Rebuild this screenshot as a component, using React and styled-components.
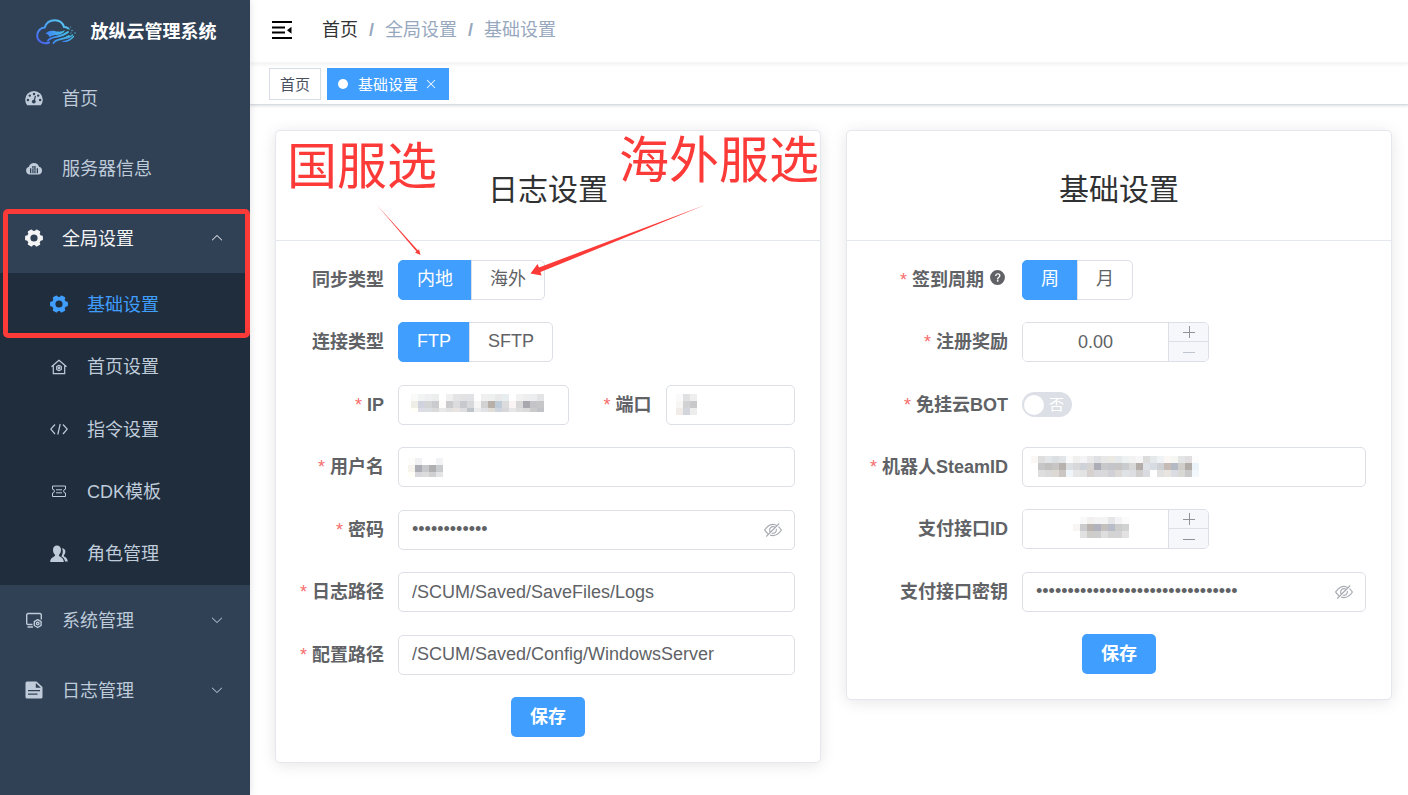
import React, { useState } from 'react'
import styled, { createGlobalStyle, css } from 'styled-components'

const GlobalStyle = createGlobalStyle`
    * {
        box-sizing: border-box;
    }
    body {
        margin: 0;
        background: #fff;
        color: #606266;
        font-family: "Liberation Sans", "Noto Sans CJK SC", sans-serif;
        font-size: 18px;
    }
    button, input {
        font-family: inherit;
        font-size: inherit;
        color: inherit;
    }
    a {
        text-decoration: none;
        color: inherit;
    }
`;

const Layout = styled.div`
    display: flex;
    min-height: 100vh;
`;

/* ---------- sidebar ---------- */

const Sidebar = styled.aside`
    position: relative;
    z-index: 2;
    flex: 0 0 250px;
    background: #304156;
    color: #bfcbd9;
    box-shadow: 0 0 8px rgba(0, 0, 0, 0.12);
`;

const Brand = styled.a`
    display: flex;
    align-items: center;
    justify-content: center;
    gap: 15px;
    height: 63px;
    padding-left: 2px;
`;

const BrandName = styled.h1`
    margin: 0;
    color: #fff;
    font-size: 18px;
    line-height: 62px;
`;

const itemStyle = css`
    display: flex;
    align-items: center;
    gap: 19px;
    width: 100%;
    padding: 0 26px 0 25px;
    border: none;
    background: none;
    text-align: left;
    cursor: pointer;
    svg:first-child {
        flex: none;
        width: 18px;
        height: 18px;
    }
    span {
        flex: 1;
        padding-bottom: 3px;
    }
`;

const MenuLink = styled.a`
    ${itemStyle}
    height: 70px;
`;

const MenuButton = styled.button`
    ${itemStyle}
    height: 70px;
    color: ${props => (props.$open ? '#f4f4f5' : '#bfcbd9')};
`;

const SubMenu = styled.div`
    display: flex;
    flex-direction: column;
    min-height: 312px;
    background: #1f2d3d;
`;

const SubLink = styled.a`
    ${itemStyle}
    flex: 1;
    padding-left: 50px;
    color: ${props => (props.$active ? '#409eff' : '#bfcbd9')};
`;

const Chevron = styled.svg`
    width: 14px;
    height: 14px;
    transform: ${props => (props.$up ? 'rotate(180deg)' : 'none')};
`;

const RedFrame = styled.div`
    position: absolute;
    top: 209px;
    left: 3px;
    right: 0;
    height: 129px;
    border: 5px solid #fc3a38;
    border-radius: 5px;
    pointer-events: none;
`;

/* ---------- top bars ---------- */

const Content = styled.div`
    flex: 1;
    min-width: 0;
`;

const Navbar = styled.header`
    display: flex;
    align-items: center;
    gap: 30px;
    height: 63px;
    padding-left: 21px;
    box-shadow: 0 1px 4px rgba(0, 21, 41, 0.08);
`;

const FoldButton = styled.button`
    display: flex;
    padding: 0 0 4px;
    border: none;
    background: none;
    color: #000;
`;

const Crumbs = styled.nav`
    display: flex;
    gap: 11px;
    line-height: 60px;
    padding-bottom: 3px;
    color: #97a8be;
    a {
        color: #303133;
    }
`;

const TagsBar = styled.div`
    display: flex;
    align-items: center;
    gap: 6px;
    height: 42px;
    padding-left: 19px;
    border-bottom: 1px solid #d8dce5;
    box-shadow: 0 1px 3px rgba(0, 0, 0, 0.12), 0 0 3px rgba(0, 0, 0, 0.04);
`;

const Tag = styled.a`
    display: flex;
    align-items: center;
    gap: 6px;
    height: 32px;
    padding: 0 10px;
    border: 1px solid ${props => (props.$active ? '#409eff' : '#d8dce5')};
    background: ${props => (props.$active ? '#409eff' : '#fff')};
    color: ${props => (props.$active ? '#fff' : '#495060')};
    font-size: 15px;
`;

const Dot = styled.i`
    width: 10px;
    height: 10px;
    margin-right: 4px;
    border-radius: 50%;
    background: #fff;
`;

/* ---------- cards ---------- */

const Main = styled.main`
    display: grid;
    grid-template-columns: 1fr 1fr;
    align-items: start;
    gap: 25px;
    padding: 25px 16px 25px 25px;
`;

const Card = styled.section`
    position: relative;
    border: 1px solid #e4e7ed;
    border-radius: 5px;
    background: #fff;
    box-shadow: 0 2px 15px rgba(0, 0, 0, 0.1);
`;

const CardTitle = styled.h2`
    margin: 0;
    height: 110px;
    padding-top: 9px;
    border-bottom: 1px solid #e4e7ed;
    color: #303133;
    font-size: 30px;
    font-weight: normal;
    line-height: 100px;
    text-align: center;
`;

const Form = styled.form`
    display: flex;
    flex-direction: column;
    justify-content: space-between;
    min-height: ${props => props.$minHeight}px;
    margin: 19px 25px 25px;
`;

const Row = styled.div`
    display: flex;
    align-items: center;
    height: 40px;
`;

const SplitRow = styled.div`
    display: grid;
    grid-template-columns: 13fr 11fr;
`;

const Label = styled.label`
    display: flex;
    flex: none;
    justify-content: flex-end;
    width: ${props => props.$width}px;
    padding-right: 14px;
    font-weight: bold;
    line-height: 40px;
    white-space: nowrap;
    svg {
        margin: 9px 2px 0 5px;
    }
`;

const Star = styled.span`
    margin-right: 5px;
    color: #f56c6c;
    font-weight: normal;
`;

const Field = styled.div`
    position: relative;
    display: flex;
    flex: 1;
    min-width: 0;
    align-items: center;
`;

const TextInput = styled.input`
    width: 100%;
    height: 40px;
    padding: 0 13px;
    border: 1px solid #dcdfe6;
    border-radius: 5px;
    outline: none;
    background: #fff;
`;

const EyeButton = styled.button`
    position: absolute;
    right: 13px;
    display: flex;
    padding: 0;
    border: none;
    background: none;
    color: #a8abb2;
`;

const Segments = styled.div`
    display: flex;
`;

const Segment = styled.label`
    display: flex;
    height: 40px;
    margin-left: -1px;
    padding: 0 18px;
    border: 1px solid ${props => (props.$on ? '#409eff' : '#dcdfe6')};
    background: ${props => (props.$on ? '#409eff' : '#fff')};
    color: ${props => (props.$on ? '#fff' : '#606266')};
    line-height: 36px;
    cursor: pointer;
    &:first-child {
        margin-left: 0;
        border-radius: 5px 0 0 5px;
    }
    &:last-child {
        border-radius: 0 5px 5px 0;
    }
    input {
        appearance: none;
        width: 0;
        margin: 0;
    }
`;

const NumberBox = styled.div`
    position: relative;
    display: flex;
    width: 187px;
    height: 40px;
    border: 1px solid #dcdfe6;
    border-radius: 5px;
    overflow: hidden;
    input {
        flex: 1;
        min-width: 0;
        padding: 0 5px;
        border: none;
        outline: none;
        text-align: center;
    }
`;

const Steps = styled.div`
    display: grid;
    grid-template-rows: 18px 1fr;
    width: 40px;
    border-left: 1px solid #dcdfe6;
`;

const StepButton = styled.button`
    display: flex;
    align-items: center;
    justify-content: center;
    padding: 0;
    border: none;
    background: #f5f7fa;
    color: ${props => (props.disabled ? '#c0c4cc' : '#909399')};
    & + & {
        border-top: 1px solid #dcdfe6;
    }
`;

const Switch = styled.label`
    display: flex;
    align-items: center;
    justify-content: space-between;
    width: 50px;
    height: 25px;
    padding: 0 8px 0 2px;
    border-radius: 13px;
    background: #dcdfe6;
    color: #fff;
    font-size: 15px;
    line-height: 25px;
    input {
        appearance: none;
        width: 20px;
        height: 20px;
        margin: 0;
        border-radius: 50%;
        background: #fff;
    }
`;

const SaveButton = styled.button`
    align-self: center;
    height: 40px;
    padding: 0 19px;
    border: none;
    border-radius: 5px;
    background: #409eff;
    color: #fff;
    font-weight: bold;
    line-height: 38px;
`;

const MosaicSvg = styled.svg`
    position: absolute;
    top: ${props => props.$top}px;
    left: ${props => props.$left}px;
    pointer-events: none;
`;

const Note = styled.p`
    position: absolute;
    top: ${props => props.$top}px;
    left: ${props => props.$left}px;
    margin: 0;
    color: #fc3a38;
    font-size: 50px;
    line-height: 60px;
    white-space: nowrap;
    pointer-events: none;
`;

const Arrows = styled.svg`
    position: absolute;
    top: 0;
    left: 0;
    pointer-events: none;
`;

/* ---------- icons ---------- */

const Glyph = ({ size = 18, children }) => (
    <svg width={size} height={size} viewBox="0 0 1024 1024" fill="currentColor" aria-hidden="true">{children}</svg>
)

const Line = ({ children, width = 1.3 }) => (
    <svg viewBox="0 0 18 18" fill="none" stroke="currentColor" strokeWidth={width} strokeLinejoin="round" aria-hidden="true">{children}</svg>
)

const CloseIcon = () => (
    <Glyph size={14}>
        <path d="M764.288 214.592 512 466.88 259.712 214.592a31.936 31.936 0 0 0-45.12 45.12L466.752 512 214.528 764.224a31.936 31.936 0 1 0 45.12 45.184L512 557.184l252.288 252.288a31.936 31.936 0 0 0 45.12-45.12L557.12 512.064l252.288-252.352a31.936 31.936 0 1 0-45.12-45.184z" />
    </Glyph>
)

const HideIcon = () => (
    <Glyph>
        <path d="M876.8 156.8c0-9.6-3.2-16-9.6-22.4-6.4-6.4-12.8-9.6-22.4-9.6-9.6 0-16 3.2-22.4 9.6L736 220.8c-64-32-137.6-51.2-224-60.8-160 16-288 73.6-377.6 176C44.8 438.4 0 496 0 512s48 73.6 134.4 176c22.4 25.6 44.8 48 73.6 67.2l-86.4 89.6c-6.4 6.4-9.6 12.8-9.6 22.4 0 9.6 3.2 16 9.6 22.4 6.4 6.4 12.8 9.6 22.4 9.6 9.6 0 16-3.2 22.4-9.6l704-710.4c3.2-6.4 6.4-12.8 6.4-22.4Zm-646.4 528c-76.8-70.4-128-128-153.6-172.8 28.8-48 80-105.6 153.6-172.8C304 272 400 230.4 512 224c64 3.2 124.8 19.2 176 44.8l-54.4 54.4C598.4 300.8 560 288 512 288c-64 0-115.2 22.4-160 64s-64 96-64 160c0 48 12.8 89.6 35.2 124.8L256 707.2c-9.6-6.4-19.2-16-25.6-22.4Zm140.8-96c-12.8-22.4-19.2-48-19.2-76.8 0-44.8 16-83.2 48-112 32-28.8 67.2-48 112-48 28.8 0 54.4 6.4 73.6 19.2L371.2 588.8ZM889.599 336c-12.8-16-28.8-28.8-41.6-41.6l-48 48c73.6 67.2 124.8 124.8 150.4 169.6-28.8 48-80 105.6-153.6 172.8-73.6 67.2-172.8 108.8-284.8 115.2-51.2-3.2-99.2-12.8-140.8-28.8l-48 48c57.6 22.4 118.4 38.4 188.8 44.8 160-16 288-73.6 377.6-176C979.199 585.6 1024 528 1024 512s-48.001-73.6-134.401-176Z" />
        <path d="M511.998 672c-12.8 0-25.6-3.2-38.4-6.4l-51.2 51.2c28.8 12.8 57.6 19.2 89.6 19.2 64 0 115.2-22.4 160-64 41.6-41.6 64-96 64-160 0-32-6.4-64-19.2-89.6l-51.2 51.2c3.2 12.8 6.4 25.6 6.4 38.4 0 44.8-16 83.2-48 112-32 28.8-67.2 48-112 48Z" />
    </Glyph>
)

const Arrow = ({ up }) => (
    <Chevron $up={up} viewBox="0 0 1024 1024" fill="currentColor" aria-hidden="true">
        <path d="M831.872 340.864 512 652.672 192.128 340.864a30.592 30.592 0 0 0-42.752 0 29.12 29.12 0 0 0 0 41.6L489.664 714.24a32 32 0 0 0 44.672 0l340.288-331.712a29.12 29.12 0 0 0 0-41.728 30.592 30.592 0 0 0-42.752 0z" />
    </Chevron>
)

const DashboardIcon = () => (
    <svg viewBox="0 0 18 18" aria-hidden="true">
        <path fill="currentColor" d="M2.2 16.2A9 9 0 0 1 .2 10.800 8.800 8.800 0 0 1 17.800 10.800a9 9 0 0 1-2 5.400z" />
        <g fill="#304156">
            <circle cx="9" cy="5" r="1.200" />
            <circle cx="4.800" cy="6.600" r="1.200" />
            <circle cx="13.200" cy="6.600" r="1.200" />
            <circle cx="2.900" cy="11" r="1.200" />
            <circle cx="15.100" cy="11" r="1.200" />
            <circle cx="8.800" cy="12.600" r="1.900" />
            <path d="M9.900 6.800l1.100.3-1.300 5.500-1.300-.4z" />
        </g>
    </svg>
)

const CloudServerIcon = () => (
    <svg viewBox="0 0 18 18" aria-hidden="true">
        <path fill="currentColor" d="M4.800 15.500a4 4 0 0 1-.9-7.800A5.300 5.300 0 0 1 14 7.800a3.900 3.900 0 0 1-.8 7.700z" />
        <g fill="#304156">
            <path d="M5 9.300h1.300v4.900H5zM7.300 7h1.300v7.200H7.300zM9.300 7h1.300v7.200H9.300zM11.700 9.300H13v4.900h-1.300z" />
        </g>
        <path stroke="currentColor" strokeWidth=".5" d="M7.300 9.500h1.300M9.300 11.500h1.300" />
    </svg>
)

const GearIcon = () => (
    <svg viewBox="0 0 18 18" fill="currentColor" aria-hidden="true">
        <circle cx="9" cy="9" r="5.400" fill="none" stroke="currentColor" strokeWidth="3.600" />
        {[0, 60, 120, 180, 240, 300].map(a => (
            <rect key={a} x="13.200" y="6.400" width="4.700" height="5.200" rx="1.300" transform={`rotate(${a} 9 9)`} />
        ))}
    </svg>
)

const HomeIcon = () => (
    <Line width={1.2}>
        <path d="M1.500 8.700 9 2.200l7.500 6.500M3.300 7.500v8.200h11.400V7.500" />
        <path d="M9 7.300l2.300 1.300v2.800L9 12.700l-2.300-1.300V8.600z" />
        <circle cx="9" cy="10" r=".8" />
    </Line>
)

const CodeIcon = () => (
    <Line width={1.200}>
        <path d="M5 4.500.8 9.200 5 14M13 4.500l4.200 4.700L13 14M10.200 4 7.800 14.500" />
    </Line>
)

const TicketIcon = () => (
    <Line width={1}>
        <path d="M2.500 4h13v3.200a1.900 1.900 0 0 0 0 3.800v3.500h-13V11a1.900 1.900 0 0 0 0-3.800zM6 7.800h6M6 10.800h6" />
    </Line>
)

const PeopleIcon = () => (
    <svg viewBox="0 0 18 18" fill="currentColor" aria-hidden="true">
        <path d="M7 .6c2.500 0 4 1.800 4 4.300 0 2-.8 3.600-1.800 4.600-.4.500-.3 1.300.3 1.700 2.300 1.200 4 2.100 4.300 5.900H.2c.2-3.800 2-4.700 4.300-5.900.6-.4.700-1.200.3-1.700C3.800 8.500 3 6.900 3 4.900 3 2.400 4.500.6 7 .6z" />
        <path d="M12 3.200c2 0 3.400 1.300 3.400 3.300 0 1.600-.6 2.800-1.400 3.600-.3.500-.2 1 .2 1.300 1.900 1 3.300 1.900 3.600 5.200h-2.700c-.5-2.900-1.800-4.300-3.800-5.400.9-1.300 1.500-2.800 1.500-4.700 0-1.300-.3-2.400-.8-3.300z" />
    </svg>
)

const ScreenGearIcon = () => (
    <Line width={1.400}>
        <path d="M16.300 8.500V3.800a1.300 1.300 0 0 0-1.300-1.300H3a1.300 1.300 0 0 0-1.300 1.300v8.400A1.300 1.300 0 0 0 3 13.500h4.500M2.500 16h5.500" />
        <path d="M12.700 8.600l3.400 2v3.900l-3.400 2-3.400-2v-3.900z" />
        <circle cx="12.700" cy="12.600" r="1.300" />
    </Line>
)

const DocIcon = () => (
    <svg viewBox="0 0 18 18" fill="currentColor" aria-hidden="true">
        <path fillRule="evenodd" d="M2 .5h9.500L17.500 6v10a1.500 1.500 0 0 1-1.500 1.500H2A1.500 1.500 0 0 1 .5 16V2A1.500 1.500 0 0 1 2 .5zM10.800 2v4.700h5zM3 9v1.200h12V9zM3 12.600v1.200h9.500v-1.200z" />
    </svg>
)

const FoldIcon = () => (
    <svg width="21" height="20" viewBox="0 0 21 20" aria-hidden="true">
        <path stroke="#000" strokeWidth="2" d="M1 2h20M1 7.500h13M1 12.500h13M1 18h20" />
        <path d="M20.500 6.700v7L16 10.200z" />
    </svg>
)

const HelpIcon = () => (
    <Glyph size={17}>
        <path d="M512 64a448 448 0 1 1 0 896 448 448 0 0 1 0-896m23.744 191.488c-52.096 0-92.928 14.784-123.200 44.352-30.976 29.568-45.760 70.400-45.760 122.496h80.256c0-29.568 5.632-52.800 17.600-68.992 13.376-19.712 35.200-28.864 66.176-28.864 23.936 0 42.944 6.336 56.320 19.712 12.672 13.376 19.712 31.680 19.712 54.912 0 17.600-6.336 34.496-19.008 49.984l-8.448 9.856c-45.760 40.832-73.216 70.400-82.368 89.408-9.856 19.008-14.080 42.240-14.080 68.992v9.856h80.960v-9.856c0-16.896 3.520-31.680 10.560-45.760 6.336-12.672 15.488-24.640 28.160-35.200 33.792-29.568 54.208-48.576 60.544-55.616 16.896-22.528 26.048-51.392 26.048-86.592 0-42.944-14.080-76.736-42.240-101.376-28.160-25.344-65.472-37.312-111.232-37.312m-12.672 406.208a54.272 54.272 0 0 0-38.720 14.784 49.408 49.408 0 0 0-15.488 38.016c0 15.488 4.928 28.160 15.488 38.016A54.848 54.848 0 0 0 523.072 768c15.488 0 28.160-4.928 38.720-14.784a51.520 51.520 0 0 0 16.192-38.720 51.968 51.968 0 0 0-15.488-38.016 55.936 55.936 0 0 0-39.424-14.784" />
    </Glyph>
)

const Logo = () => (
    <svg width="40" height="26" viewBox="0 0 40 26" fill="none" strokeLinecap="round" aria-hidden="true">
        <defs>
            <linearGradient id="cloud" x1="0" y1="1" x2="1" y2="0">
                <stop offset="0" stopColor="#4a5cf0" />
                <stop offset=".5" stopColor="#4aa0f5" />
                <stop offset="1" stopColor="#5cd0f0" />
            </linearGradient>
            <linearGradient id="wave" x1="0" y1="0" x2="1" y2="0">
                <stop offset="0" stopColor="#3f7df8" />
                <stop offset="1" stopColor="#46c6e8" />
            </linearGradient>
        </defs>
        <path stroke="url(#cloud)" strokeWidth="2" d="M13 23.500C7 26 1.200 22 1.200 16.500c0-4.500 3.300-7.700 7.500-7.900C10 4 14 1.200 18.800 1.200c4.700 0 8 2.500 9.200 6.900 1.500 0 3 .4 4 1.100" />
        <path fill="url(#wave)" d="M9.500 14.500c5-4.500 8.500-2.300 12-1.900 3 .3 5.500-.3 7.500-1.300-2 3.500-4.500 4.600-8 4.600-3 0-5 .5-7.500 2-1-2-2-3-4-3.400z" />
        <path stroke="url(#wave)" strokeWidth="1.800" d="M12 21.500c5-5.500 11-1.500 20-8.500M17.500 24c3-5 8-2 15.500-7" />
        <path stroke="url(#wave)" strokeWidth="1.200" d="M27 22.500c4 0 8-2 10.500-5M30 19.500c3-.6 5-2 6.500-3.500" />
        <g fill="#46c6e8">
            <circle cx="33" cy="10" r=".8" />
            <circle cx="36" cy="11.500" r=".7" />
            <circle cx="34.500" cy="8" r=".5" />
            <circle cx="39" cy="14" r=".7" />
            <circle cx="35" cy="14" r=".6" />
        </g>
    </svg>
)

const Plus = () => (
    <svg width="12" height="12" viewBox="0 0 12 12" stroke="currentColor" aria-hidden="true"><path d="M0 6.500h12M6.500 0v12" /></svg>
)

const Minus = () => (
    <svg width="12" height="12" viewBox="0 0 12 12" stroke="currentColor" aria-hidden="true"><path d="M0 6.500h12" /></svg>
)

/* ---------- masked values ---------- */

const MASKS = {
    ip: [
        'fafaf8 f2f4f4 eeeff0 eceeee - f0f0f0 e4e4e6 e2e2e2 e0e2e6 - f0f0f0 eef0f0 e9e9ea e8edf0 - f2f2f2 eeeeee ecedee e2e4e6',
        'eeeee6 d0d2de d4d4d6 cacbcf fdfcfa cbcbcd dcdcde c6cacf d6d8da f5f5f5 d2d2d2 b6b0a8 c0cbd8 dcdcdc faf5f4 d8d8d8 a8a8ae c4c4c8 c6c6c8',
        'fffff8 dcdce6 dcdfe2 dadada e9e9e9 e2e2e2 e9e4e1 dedee0 bec4c9 ececee e0e2e6 e0dcd6 ced4de d8d8da e7e7e9 dededf dadada cacaca bfc2c6',
    ],
    port: [
        'fafafa dfe1e2 eeeeee',
        'f8f6f4 d2d2d5 c8c8ca',
        'f1ece8 d2d6dc ededed',
    ],
    user: [
        'fdfdfc f2f2f4 - - f2f3f4',
        'f6f4ec acacb4 c6c8cc b0b0b3 c9cccf',
        'fffff8 d8d8dc dcdcdc d0d0d2 e2e4e6',
    ],
    steam: [
        'fbf7f5 dedede e3e6e9 dcdfe2 e2e5e8 fbfafa f0f0ee f4f4f6 e9e9e9 dfe0e3 e8e8e8 ece8e4 e6e9ec eef1f2 f2f2f2 f6f6f6 dcdcdc e6e9e9 f0f3f5 faf7f4 f6f6f3 e2e4e6 e0dede fdfdfd',
        '- c6c6c6 c2c0be c8c6c4 b8b2ae dcdfe2 d8d8da d0d2d9 d6d4d2 adadb7 c8c8cb c4c5cb c6c4c4 c9cbcf d8d8d9 b3aca8 dee1e6 d6dce1 d0d1d4 c7bcb5 b3bac3 d0ceca b2aca8 eaf3fa',
        '- dedede dadada dcd8d2 ccc6c2 eff6fb e6e6e6 e3e3e3 d6d1ce d8d8dc d9d9dc d0d0d6 dcd8d5 dfe3e6 dcdee1 d0cfce dadbe1 - e1e1e1 e8e4df dadce1 d8d8d5 c9c9c9 f2f8fc',
    ],
    pay: [
        '- f9f9f9 f1f0ef f3f3f5 f4f4f4 e4e6e7 f3f3f5 fbfbfb',
        'f8f5f3 cacccd bab4b0 b0b2be c4c0bd b8bcc8 cccccd d1d3d3',
        '- e1e1e1 cecdca cdcdce dedede d3d3d3 d3d3d5 e2e2e2',
    ],
}

const CELL = 7

function Mosaic({ name, top, left }) {
    const rows = MASKS[name].map(r => r.split(' '))
    const height = name === 'ip' ? 18 : name === 'user' ? 19 : 21
    return (
        <MosaicSvg $top={top} $left={left} width={rows[0].length * CELL} height={height} shapeRendering="crispEdges" aria-hidden="true">
            {rows.map((row, y) => row.map((c, x) => c !== '-' && (
                <rect key={x + '-' + y} x={x * CELL} y={y * CELL} width={CELL} height={CELL} fill={'#' + c} />
            )))}
        </MosaicSvg>
    )
}

/* ---------- form parts ---------- */

function Item({ id, label, width, required, help, children }) {
    return (
        <Row>
            <Label htmlFor={id} $width={width}>
                {required && <Star>*</Star>}
                {label}
                {help && <HelpIcon />}
            </Label>
            {children}
        </Row>
    )
}

function RadioGroup({ id, options }) {
    const [value, setValue] = useState(options[0])
    return (
        <Segments role="radiogroup">
            {options.map((o, i) => (
                <Segment key={o} $on={o === value}>
                    <input id={i === 0 ? id : undefined} type="radio" name={id} checked={o === value} onChange={() => setValue(o)} />
                    {o}
                </Segment>
            ))}
        </Segments>
    )
}

function PasswordField({ id, length }) {
    return (
        <Field>
            <TextInput id={id} type="password" defaultValue={'x'.repeat(length)} autoComplete="off" />
            <EyeButton type="button" aria-label="hide"><HideIcon /></EyeButton>
        </Field>
    )
}

function NumberField({ id, value, atMin, children }) {
    return (
        <NumberBox>
            <input id={id} type="text" defaultValue={value} />
            {children}
            <Steps>
                <StepButton type="button" aria-label="+"><Plus /></StepButton>
                <StepButton type="button" aria-label="-" disabled={atMin}><Minus /></StepButton>
            </Steps>
        </NumberBox>
    )
}

function SideMenu() {
    return (
        <Sidebar>
            <Brand href="#">
                <Logo />
                <BrandName>放纵云管理系统</BrandName>
            </Brand>
            <nav>
                <MenuLink href="#"><DashboardIcon /><span>首页</span></MenuLink>
                <MenuLink href="#"><CloudServerIcon /><span>服务器信息</span></MenuLink>
                <MenuButton $open><GearIcon /><span>全局设置</span><Arrow up /></MenuButton>
                <SubMenu>
                    <SubLink href="#" $active><GearIcon /><span>基础设置</span></SubLink>
                    <SubLink href="#"><HomeIcon /><span>首页设置</span></SubLink>
                    <SubLink href="#"><CodeIcon /><span>指令设置</span></SubLink>
                    <SubLink href="#"><TicketIcon /><span>CDK模板</span></SubLink>
                    <SubLink href="#"><PeopleIcon /><span>角色管理</span></SubLink>
                </SubMenu>
                <MenuButton><ScreenGearIcon /><span>系统管理</span><Arrow /></MenuButton>
                <MenuButton><DocIcon /><span>日志管理</span><Arrow /></MenuButton>
            </nav>
            <RedFrame />
        </Sidebar>
    )
}

function LogCard() {
    return (
        <Card>
            <CardTitle>日志设置</CardTitle>
            <Form $minHeight={477}>
                <Item id="sync" label="同步类型" width={97}>
                    <RadioGroup id="sync" options={['内地', '海外']} />
                </Item>
                <Item id="link" label="连接类型" width={97}>
                    <RadioGroup id="link" options={['FTP', 'SFTP']} />
                </Item>
                <SplitRow>
                    <Item id="ip" label="IP" width={97} required>
                        <Field>
                            <TextInput id="ip" />
                            <Mosaic name="ip" top={9} left={13} />
                        </Field>
                    </Item>
                    <Item id="port" label="端口" width={97} required>
                        <Field>
                            <TextInput id="port" />
                            <Mosaic name="port" top={9} left={10} />
                        </Field>
                    </Item>
                </SplitRow>
                <Item id="user" label="用户名" width={97} required>
                    <Field>
                        <TextInput id="user" />
                        <Mosaic name="user" top={11} left={10} />
                    </Field>
                </Item>
                <Item id="pwd" label="密码" width={97} required>
                    <PasswordField id="pwd" length={12} />
                </Item>
                <Item id="logs" label="日志路径" width={97} required>
                    <Field><TextInput id="logs" defaultValue="/SCUM/Saved/SaveFiles/Logs" /></Field>
                </Item>
                <Item id="conf" label="配置路径" width={97} required>
                    <Field><TextInput id="conf" defaultValue="/SCUM/Saved/Config/WindowsServer" /></Field>
                </Item>
                <SaveButton type="button">保存</SaveButton>
            </Form>
            <Note $top={6} $left={11}>国服选</Note>
            <Note $top={0} $left={343}>海外服选</Note>
            <Arrows width="450" height="160" fill="#fc3a38" aria-hidden="true">
                <path d="M101 74 142 119.500l1-1.500 1.500 6-5.500-2.500 1.500-1z" />
                <path d="M429 74 263 136.500l-1.500-3.500-7 9.500 11 2-1-3.500z" />
            </Arrows>
        </Card>
    )
}

function BaseCard() {
    return (
        <Card>
            <CardTitle>基础设置</CardTitle>
            <Form $minHeight={414}>
                <Item id="cycle" label="签到周期" width={150} required help>
                    <RadioGroup id="cycle" options={['周', '月']} />
                </Item>
                <Item id="reward" label="注册奖励" width={150} required>
                    <NumberField id="reward" value="0.00" atMin />
                </Item>
                <Item id="bot" label="免挂云BOT" width={150} required>
                    <Switch><input id="bot" type="checkbox" />否</Switch>
                </Item>
                <Item id="steam" label="机器人SteamID" width={150} required>
                    <Field>
                        <TextInput id="steam" />
                        <Mosaic name="steam" top={9} left={9} />
                    </Field>
                </Item>
                <Item id="payid" label="支付接口ID" width={150}>
                    <NumberField id="payid" value="">
                        <Mosaic name="pay" top={7} left={50} />
                    </NumberField>
                </Item>
                <Item id="paykey" label="支付接口密钥" width={150}>
                    <PasswordField id="paykey" length={32} />
                </Item>
                <SaveButton type="button">保存</SaveButton>
            </Form>
        </Card>
    )
}

function App() {
    return (
        <>
            <GlobalStyle />
            <Layout>
                <SideMenu />
                <Content>
                    <Navbar>
                        <FoldButton aria-label="fold"><FoldIcon /></FoldButton>
                        <Crumbs>
                            <a href="#">首页</a>
                            <b>/</b>
                            <span>全局设置</span>
                            <b>/</b>
                            <span>基础设置</span>
                        </Crumbs>
                    </Navbar>
                    <TagsBar>
                        <Tag href="#">首页</Tag>
                        <Tag href="#" $active><Dot />基础设置<CloseIcon /></Tag>
                    </TagsBar>
                    <Main>
                        <LogCard />
                        <BaseCard />
                    </Main>
                </Content>
            </Layout>
        </>
    )
}

export default App
